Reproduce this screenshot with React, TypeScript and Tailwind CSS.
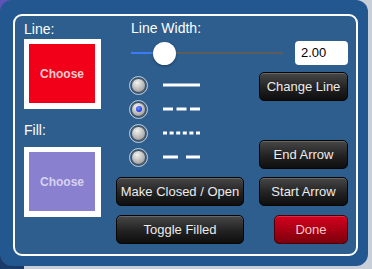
const btn =
  "h-[29px] rounded-[5px] border border-[#050505] bg-[linear-gradient(to_bottom,#474747,#222222_55%,#0e0e0e)] shadow-[inset_0_1px_0_rgba(255,255,255,0.18)] text-[13px] text-[#ececec] flex items-center justify-center";

function Radio({ selected }: { selected?: boolean }) {
  return (
    <div className="w-[19px] h-[19px] rounded-full border border-[#c9ced6] p-[1px] shrink-0">
      <div className="w-full h-full rounded-full border border-[#505050] bg-[radial-gradient(circle_at_40%_30%,#f2f2f2,#b4b4b4_60%,#7c7c7c)] flex items-center justify-center">
        {selected && (
          <div className="w-[6px] h-[6px] rounded-full bg-[radial-gradient(circle_at_40%_35%,#6f8cff,#1f3be0_70%)]" />
        )}
      </div>
    </div>
  );
}

function LineSample({ dash }: { dash?: string }) {
  return (
    <svg width="37" height="4" viewBox="0 0 37 4">
      <line x1="0" y1="2" x2="37" y2="2" stroke="#ffffff" strokeWidth="3" strokeDasharray={dash} />
    </svg>
  );
}

export default function App() {
  return (
    <div className="relative w-[372px] h-[269px] overflow-hidden bg-[#c8cfd9] font-['Liberation_Sans',Arial,sans-serif]">
      <div className="absolute left-0 top-0 w-[20px] h-[20px] bg-[#5e54b8]" />
      <div className="absolute left-0 bottom-0 w-[24px] h-[24px] bg-[#1a3a68]" />
      <div className="relative w-[368px] h-[266px] rounded-[12px] bg-[#22578f] pl-[13px] pt-[14px]">
        <div className="w-[345px] h-[242px] rounded-[9px] border-2 border-white bg-[#2d5e8e] flex">
          {/* left column */}
          <div className="ml-[9px] pt-[5px] flex flex-col w-[77px]">
            <div className="h-[16px] leading-[16px] text-[14px] text-white">Line:</div>
            <div className="mt-[2px] w-[77px] h-[70px] bg-white pl-[5px] pt-[5px]">
              <div className="w-[66px] h-[59px] bg-[#f2001a] flex items-center justify-center text-[12px] font-bold text-[#f8cbcf]">
                Choose
              </div>
            </div>
            <div className="mt-[13px] h-[16px] leading-[16px] text-[14px] text-white">Fill:</div>
            <div className="mt-[9px] w-[77px] h-[70px] bg-white pl-[5px] pt-[5px]">
              <div className="w-[66px] h-[59px] bg-[#8a80d0] flex items-center justify-center text-[12px] font-bold text-[#d6d2f0]">
                Choose
              </div>
            </div>
          </div>

          {/* right area */}
          <div className="ml-[15px] w-[232px] flex flex-col pt-[4px]">
            <div className="pl-[15px] h-[16px] leading-[16px] text-[14px] text-white">Line Width:</div>
            <div className="mt-[5px] h-[24px] pl-[15px] flex items-center">
              <div className="relative w-[152px] h-[24px] flex items-center">
                <div className="w-[22px] h-[2px] bg-[#3a7cf5]" />
                <div className="w-[23px] h-[23px] rounded-full bg-white shadow-[0_1px_3px_rgba(0,0,0,0.35)]" />
                <div className="flex-1 h-[2px] bg-[#5d5d5d]" />
              </div>
              <div className="ml-[12px] w-[53px] h-[24px] rounded-[4px] bg-white text-[13px] text-black flex items-center pl-[6px]">
                2.00
              </div>
            </div>
            <div className="mt-[7px] flex gap-[15px]">
              <div className="w-[128px] flex flex-col">
                <div className="mt-[1px] flex flex-col">
                  <div className="h-[24px] flex items-center pl-[13px] gap-[15px]">
                    <Radio />
                    <LineSample />
                  </div>
                  <div className="h-[24px] flex items-center pl-[13px] gap-[15px]">
                    <Radio selected />
                    <LineSample dash="10 3.5" />
                  </div>
                  <div className="h-[24px] flex items-center pl-[13px] gap-[15px]">
                    <Radio />
                    <LineSample dash="4 2.6" />
                  </div>
                  <div className="h-[24px] flex items-center pl-[13px] gap-[15px]">
                    <Radio />
                    <LineSample dash="15 8" />
                  </div>
                </div>
                <div className={`mt-[8px] w-[128px] ${btn}`}>Make Closed / Open</div>
                <div className={`mt-[9px] w-[128px] ${btn}`}>Toggle Filled</div>
              </div>
              <div className="w-[89px] flex flex-col">
                <div className={`w-[89px] ${btn}`}>Change Line</div>
                <div className={`mt-[39px] w-[89px] ${btn}`}>End Arrow</div>
                <div className={`mt-[8px] w-[89px] ${btn}`}>Start Arrow</div>
                <div className="mt-[9px] self-end w-[74px] h-[29px] rounded-[5px] border border-[#4a0006] bg-[linear-gradient(to_bottom,#d4001e,#a50013_55%,#7c000c)] shadow-[inset_0_1px_0_rgba(255,255,255,0.18)] text-[13px] text-[#f8c8c8] flex items-center justify-center">
                  Done
                </div>
              </div>
            </div>
          </div>
        </div>
      </div>
    </div>
  );
}
